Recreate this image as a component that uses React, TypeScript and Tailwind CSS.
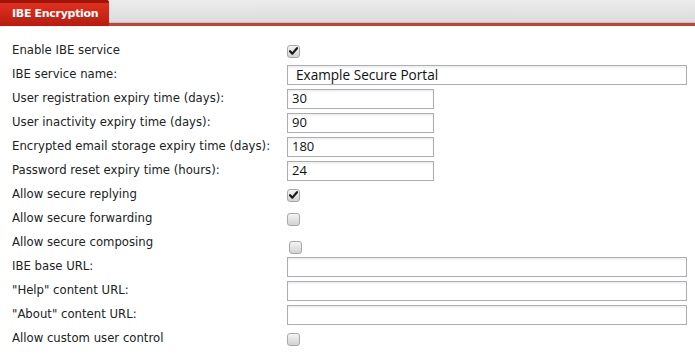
import React from "react";

const font = { fontFamily: '"DejaVu Sans", Verdana, sans-serif' };

function Check({ checked, offset = false }: { checked?: boolean; offset?: boolean }) {
  return (
    <div
      className={`w-[13px] h-[13px] rounded-[3px] border border-[#a8a8a8] bg-gradient-to-b from-[#f4f4f4] to-[#d2d2d2] flex items-center justify-center ${offset ? "ml-[2px] mt-[8px]" : ""}`}
    >
      {checked && (
        <svg width="9" height="8" viewBox="0 0 9 8">
          <path d="M1 4.2 L3.4 6.6 L8 1.2" stroke="#1a1a1a" strokeWidth="2.2" fill="none" strokeLinecap="round" strokeLinejoin="round" />
        </svg>
      )}
    </div>
  );
}

function TextInput({ value = "", wide, big }: { value?: string; wide?: boolean; big?: boolean }) {
  return (
    <div
      className={`h-[20px] border border-[#abadb3] bg-white shadow-[inset_0_2px_2px_rgba(0,0,0,0.06)] flex items-center ${wide ? "w-[400px]" : "w-[147px]"} ${big ? "pl-[8px] text-[13.6px]" : "pl-[4px] text-[13px]"} text-[#111]`}
      style={{ fontFamily: '"Open Sans", "Noto Sans", sans-serif' }}
    >
      {value}
    </div>
  );
}

type Row = { label: string; control: React.ReactNode };

const rows: Row[] = [
  { label: "Enable IBE service", control: <Check checked /> },
  { label: "IBE service name:", control: <TextInput value="Example Secure Portal" wide big /> },
  { label: "User registration expiry time (days):", control: <TextInput value="30" /> },
  { label: "User inactivity expiry time (days):", control: <TextInput value="90" /> },
  { label: "Encrypted email storage expiry time (days):", control: <TextInput value="180" /> },
  { label: "Password reset expiry time (hours):", control: <TextInput value="24" /> },
  { label: "Allow secure replying", control: <Check checked /> },
  { label: "Allow secure forwarding", control: <Check /> },
  { label: "Allow secure composing", control: <Check offset /> },
  { label: "IBE base URL:", control: <TextInput wide /> },
  { label: "\"Help\" content URL:", control: <TextInput wide /> },
  { label: "\"About\" content URL:", control: <TextInput wide /> },
  { label: "Allow custom user control", control: <Check /> },
];

export default function App() {
  return (
    <div className="w-[695px] h-[355px] bg-white overflow-hidden" style={font}>
      <div className="relative h-[26px] bg-gradient-to-b from-[#ececec] to-[#d9d9d9]">
        <div className="absolute left-0 right-0 bottom-[3px] h-[1px] bg-[#e9b5ae]" />
        <div className="absolute left-0 right-0 bottom-0 h-[3px] bg-[#b8473d]" />
        <div className="absolute left-0 top-0 h-[26px] w-[109px] bg-gradient-to-b from-[#e0301f] to-[#b81b10] border-t-[3px] border-[#a01408] rounded-tr-[2px] flex items-center pl-[12px]">
          <span className="text-white font-bold text-[11px] tracking-[-0.3px]">IBE Encryption</span>
        </div>
      </div>
      <div className="pt-[13px] flex flex-col">
        {rows.map((r, i) => (
          <div key={i} className="h-[24px] flex items-center">
            <div className="w-[287px] pl-[12px] text-[11.7px] text-[#222]">{r.label}</div>
            <div className="flex items-center">{r.control}</div>
          </div>
        ))}
      </div>
    </div>
  );
}
